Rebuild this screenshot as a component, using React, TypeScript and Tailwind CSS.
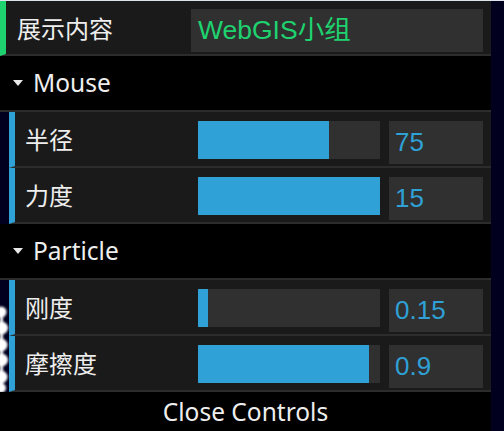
import React from "react";

const font = { fontFamily: '"Noto Sans", "Noto Sans CJK SC", sans-serif' };
const inputFont = { fontFamily: '"Liberation Sans", Arial, "Noto Sans CJK SC", sans-serif' };

function FolderTitle({ title }: { title: string }) {
  return (
    <div className="flex h-[56px] items-center border-b-2 border-[#2c2c2c] bg-black pl-[13px] text-[24.5px] text-[#eeeeee]">
      <span className="mr-[10px] h-0 w-0 border-x-[5px] border-t-[6px] border-x-transparent border-t-[#e8e8e8]" />
      <span className="leading-none">{title}</span>
    </div>
  );
}

function NumberRow({ label, value, fill }: { label: string; value: string; fill: number }) {
  return (
    <div className="flex h-[56px] border-b-2 border-l-[6px] border-[#2c2c2c] border-l-[#2fa1d6] bg-[#1a1a1a]">
      <div className="flex w-[183px] items-center pl-[10px] pt-[2px] text-[24px] text-[#eeeeee]">{label}</div>
      <div className="flex flex-1 pt-[9px] pr-[8px]">
        <div className="h-[38px] w-[182px] bg-[#303030]">
          <div className="h-full bg-[#2fa1d6]" style={{ width: `${fill}px` }} />
        </div>
        <div
          className="ml-[9px] flex h-[43px] flex-1 items-center bg-[#303030] pl-[6px] text-[26px] text-[#2fa1d6]"
          style={inputFont}
        >
          {value}
        </div>
      </div>
    </div>
  );
}

export default function App() {
  return (
    <div className="relative h-[431px] w-[504px] overflow-hidden bg-[#01001f]" style={font}>
      <div className="h-[1px] bg-[#dde3ec]" />
      <svg className="absolute left-0 top-[300px]" width="10" height="94" viewBox="0 0 10 94">
        <defs>
          <filter id="b" x="-50%" y="-10%" width="200%" height="120%">
            <feGaussianBlur stdDeviation="0.8" />
          </filter>
        </defs>
        <g fill="#ffffff" filter="url(#b)">
          <rect x="0" y="8" width="3" height="84" />
          <circle cx="1" cy="12" r="5.5" />
          <circle cx="1.5" cy="28" r="6.5" />
          <circle cx="1" cy="45" r="6.5" />
          <circle cx="1.5" cy="60" r="6.5" />
          <circle cx="1" cy="77" r="6.5" />
          <circle cx="1" cy="88" r="5" />
        </g>
      </svg>
      <div className="relative w-[491px]">
        <div className="flex h-[55px] border-b-2 border-l-[6px] border-[#2c2c2c] border-l-[#1ed36f] bg-[#1a1a1a]">
          <div className="flex w-[185px] items-center pl-[11px] pt-[2px] text-[24px] text-[#eeeeee]">展示内容</div>
          <div className="flex flex-1 pt-[8px] pr-[8px]">
            <div
              className="flex h-[43px] flex-1 items-center bg-[#303030] pl-[7px] text-[26.5px] text-[#1ed36f]"
              style={inputFont}
            >
              WebGIS小组
            </div>
          </div>
        </div>

        <FolderTitle title="Mouse" />
        <div className="ml-[9px]">
          <NumberRow label="半径" value="75" fill={131} />
          <NumberRow label="力度" value="15" fill={182} />
        </div>

        <FolderTitle title="Particle" />
        <div className="ml-[9px]">
          <NumberRow label="刚度" value="0.15" fill={10} />
          <NumberRow label="摩擦度" value="0.9" fill={171} />
        </div>

        <div className="flex h-[41px] items-center justify-center bg-black text-[24.5px] text-[#eeeeee]">
          Close Controls
        </div>
      </div>
    </div>
  );
}
